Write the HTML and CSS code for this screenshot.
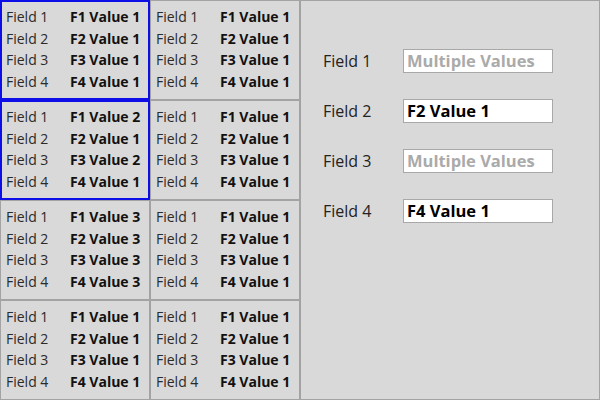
FILE: index.html
```html
<!DOCTYPE html>
<html>
<head>
<meta charset="utf-8">
<link rel="stylesheet" href="styles.css">
</head>
<body>
<div class="app">
  <div class="grid">
    <div class="cell selected"><div class="row"><span class="lab">Field 1</span><span class="val">F1 Value 1</span></div><div class="row"><span class="lab">Field 2</span><span class="val">F2 Value 1</span></div><div class="row"><span class="lab">Field 3</span><span class="val">F3 Value 1</span></div><div class="row"><span class="lab">Field 4</span><span class="val">F4 Value 1</span></div></div>
    <div class="cell"><div class="row"><span class="lab">Field 1</span><span class="val">F1 Value 1</span></div><div class="row"><span class="lab">Field 2</span><span class="val">F2 Value 1</span></div><div class="row"><span class="lab">Field 3</span><span class="val">F3 Value 1</span></div><div class="row"><span class="lab">Field 4</span><span class="val">F4 Value 1</span></div></div>
    <div class="cell selected"><div class="row"><span class="lab">Field 1</span><span class="val">F1 Value 2</span></div><div class="row"><span class="lab">Field 2</span><span class="val">F2 Value 1</span></div><div class="row"><span class="lab">Field 3</span><span class="val">F3 Value 2</span></div><div class="row"><span class="lab">Field 4</span><span class="val">F4 Value 1</span></div></div>
    <div class="cell"><div class="row"><span class="lab">Field 1</span><span class="val">F1 Value 1</span></div><div class="row"><span class="lab">Field 2</span><span class="val">F2 Value 1</span></div><div class="row"><span class="lab">Field 3</span><span class="val">F3 Value 1</span></div><div class="row"><span class="lab">Field 4</span><span class="val">F4 Value 1</span></div></div>
    <div class="cell"><div class="row"><span class="lab">Field 1</span><span class="val">F1 Value 3</span></div><div class="row"><span class="lab">Field 2</span><span class="val">F2 Value 3</span></div><div class="row"><span class="lab">Field 3</span><span class="val">F3 Value 3</span></div><div class="row"><span class="lab">Field 4</span><span class="val">F4 Value 3</span></div></div>
    <div class="cell"><div class="row"><span class="lab">Field 1</span><span class="val">F1 Value 1</span></div><div class="row"><span class="lab">Field 2</span><span class="val">F2 Value 1</span></div><div class="row"><span class="lab">Field 3</span><span class="val">F3 Value 1</span></div><div class="row"><span class="lab">Field 4</span><span class="val">F4 Value 1</span></div></div>
    <div class="cell"><div class="row"><span class="lab">Field 1</span><span class="val">F1 Value 1</span></div><div class="row"><span class="lab">Field 2</span><span class="val">F2 Value 1</span></div><div class="row"><span class="lab">Field 3</span><span class="val">F3 Value 1</span></div><div class="row"><span class="lab">Field 4</span><span class="val">F4 Value 1</span></div></div>
    <div class="cell"><div class="row"><span class="lab">Field 1</span><span class="val">F1 Value 1</span></div><div class="row"><span class="lab">Field 2</span><span class="val">F2 Value 1</span></div><div class="row"><span class="lab">Field 3</span><span class="val">F3 Value 1</span></div><div class="row"><span class="lab">Field 4</span><span class="val">F4 Value 1</span></div></div>
  </div>
  <div class="panel">
    <div class="prow"><span class="plab">Field 1</span><div class="box multi">Multiple Values</div></div>
    <div class="prow"><span class="plab">Field 2</span><div class="box">F2 Value 1</div></div>
    <div class="prow"><span class="plab">Field 3</span><div class="box multi">Multiple Values</div></div>
    <div class="prow"><span class="plab">Field 4</span><div class="box">F4 Value 1</div></div>
  </div>
</div>
</body>
</html>
```
FILE: styles.css
```css
html, body {
  margin: 0;
  padding: 0;
  background: #d9d9d9;
}
body {
  font-family: "Open Sans", "Noto Sans", sans-serif;
  width: 600px;
  height: 400px;
  overflow: hidden;
}
.app {
  display: flex;
  width: 600px;
  height: 400px;
}
.grid {
  display: grid;
  grid-template-columns: 150px 150px;
  grid-template-rows: repeat(4, 100px);
  width: 300px;
  height: 400px;
}
.cell {
  box-sizing: border-box;
  border: 1px solid #a3a3a3;
  padding: 5px 0 0 5px;
  background: #d9d9d9;
}
.cell.selected {
  border: 2px solid #0d0de8;
  padding: 4px 0 0 4px;
}
.row {
  display: flex;
  height: 21.5px;
  align-items: center;
  font-size: 14px;
}
.lab {
  width: 64px;
  color: #2a2a2a;
}
.val {
  font-weight: 700;
  color: #111;
}
.panel {
  flex: 1;
  box-sizing: border-box;
  border: 1px solid #a3a3a3;
  padding: 48px 0 0 22px;
  display: flex;
  flex-direction: column;
  gap: 26px;
}
.prow {
  display: flex;
  align-items: center;
  height: 24px;
}
.plab {
  width: 80px;
  font-size: 16px;
  color: #222;
}
.box {
  box-sizing: border-box;
  width: 150px;
  height: 24px;
  border: 1px solid #a8a8a8;
  background: #fff;
  font-size: 16.5px;
  font-weight: 700;
  color: #000;
  padding-left: 3px;
  line-height: 21px;
}
.box.multi {
  color: #aaaaaa;
}
```
